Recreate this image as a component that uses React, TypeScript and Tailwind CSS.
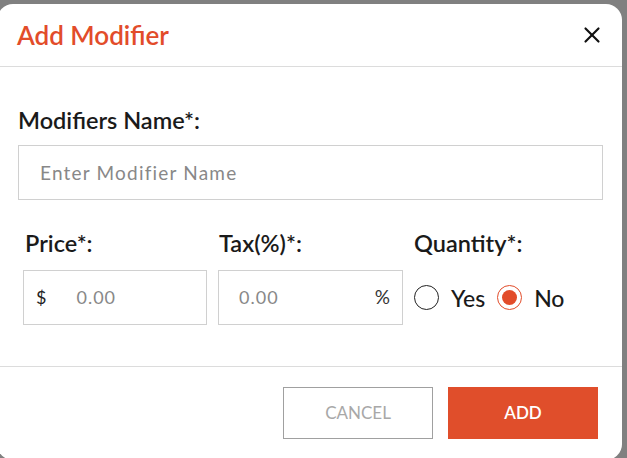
import { X } from 'lucide-react';

const font = { fontFamily: 'Lato, "Noto Sans", sans-serif' };

function Radio({ checked, label }: { checked?: boolean; label: string }) {
  return (
    <label className="flex items-center gap-[12px]">
      <span
        className={
          checked
            ? 'flex h-[25px] w-[25px] items-center justify-center rounded-full border border-[#e24c2a]'
            : 'flex h-[25px] w-[25px] items-center justify-center rounded-full border border-[#222]'
        }
      >
        {checked && <span className="h-[15px] w-[15px] rounded-full bg-[#e24c2a]" />}
      </span>
      <span className="text-[23px] font-medium leading-[24px] text-[#1a1a1a]">{label}</span>
    </label>
  );
}

export default function App() {
  return (
    <div className="h-[458px] w-[627px] overflow-hidden bg-[#808080]" style={font}>
      <div className="ml-[-3px] mt-[4px] flex h-[456px] w-[625px] flex-col rounded-2xl bg-white">
        {/* Header */}
        <div className="flex h-[63px] items-center justify-between border-b border-[#dcdcdc] pl-[20px] pr-[17px]">
          <h2 className="text-[26px] font-semibold text-[#e24c2a]">Add Modifier</h2>
          <X className="h-[26px] w-[26px] text-[#111]" strokeWidth={2} />
        </div>

        {/* Body */}
        <div className="flex flex-col px-[21px] pt-[41px]">
          <label className="text-[23.5px] font-semibold leading-[24px] text-[#1a1a1a]">Modifiers Name*:</label>
          <input
            className="mt-[13px] h-[55px] w-[585px] border border-[#d0d0d0] px-[21px] text-[19px] tracking-[1.2px] outline-none placeholder:text-[#888]"
            placeholder="Enter Modifier Name"
          />

          <div className="mt-[31px] flex gap-[11px] pl-[5px]">
            <div className="flex w-[184px] flex-col">
              <label className="pl-[2px] text-[23.5px] font-semibold leading-[24px] text-[#1a1a1a]">Price*:</label>
              <div className="mt-[15px] flex h-[55px] items-center border border-[#d0d0d0] px-[12px]">
                <span className="text-[18px] text-[#222]">$</span>
                <span className="ml-[30px] text-[18px] tracking-[1px] text-[#888]">0.00</span>
              </div>
            </div>
            <div className="flex w-[185px] flex-col">
              <label className="pl-[1px] text-[23.5px] font-semibold leading-[24px] text-[#1a1a1a]">Tax(%)*:</label>
              <div className="mt-[15px] flex h-[55px] items-center justify-between border border-[#d0d0d0] pl-[20px] pr-[12px]">
                <span className="text-[18px] tracking-[1px] text-[#888]">0.00</span>
                <span className="text-[19px] text-[#333]">%</span>
              </div>
            </div>
            <div className="flex flex-col">
              <label className="text-[23.5px] font-semibold leading-[24px] text-[#1a1a1a]">Quantity*:</label>
              <div className="mt-[15px] flex h-[55px] items-center gap-[12px]">
                <Radio label="Yes" />
                <Radio label="No" checked />
              </div>
            </div>
          </div>
        </div>

        {/* Footer */}
        <div className="mt-auto flex h-[94px] items-start justify-end gap-[15px] border-t border-[#dcdcdc] pr-[24px] pt-[20px]">
          <button className="h-[52px] w-[150px] border border-[#a0a0a0] text-[17px] text-[#a8a8a8]">CANCEL</button>
          <button className="h-[52px] w-[150px] bg-[#e04e2b] text-[17px] font-semibold text-white">ADD</button>
        </div>
      </div>
    </div>
  );
}
